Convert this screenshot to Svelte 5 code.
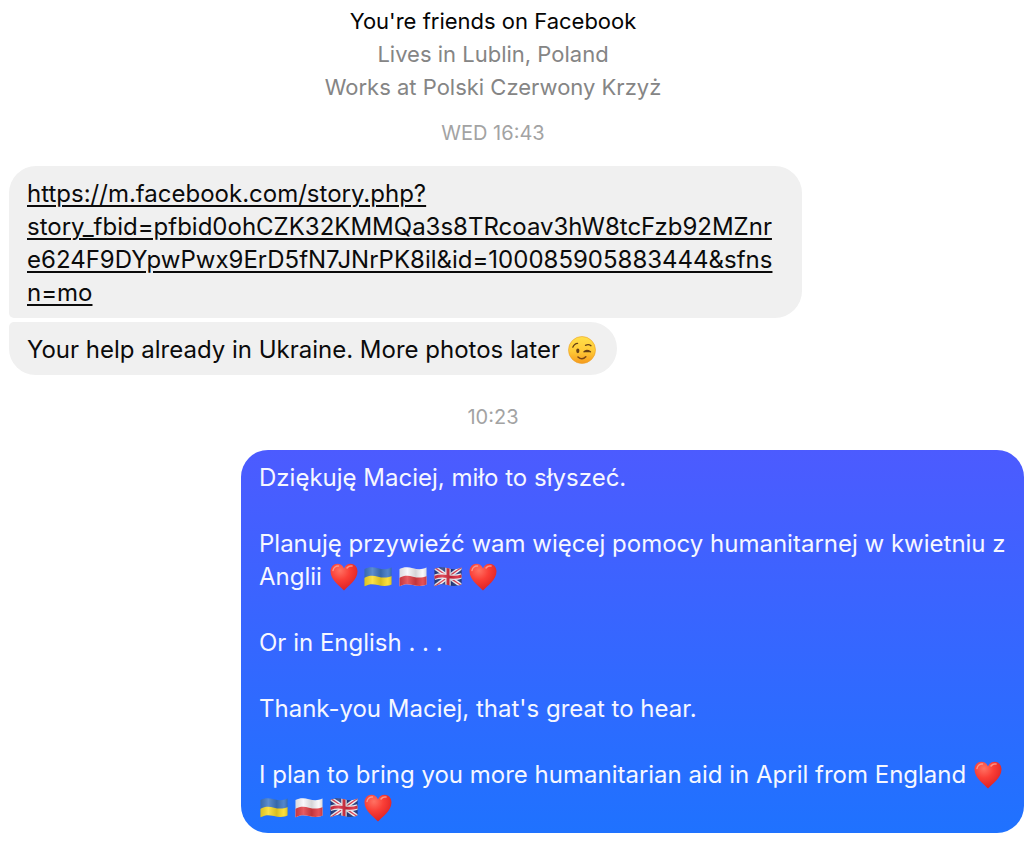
<script>
  const outgoing = [
    'Dziękuję Maciej, miło to słyszeć.',
    '',
    'Planuję przywieźć wam więcej pomocy humanitarnej w kwietniu z Anglii {heart} {ua} {pl} {gb} {heart}',
    '',
    'Or in English . . .',
    '',
    "Thank-you Maciej, that's great to hear.",
    '',
    'I plan to bring you more humanitarian aid in April from England {heart} {ua} {pl} {gb} {heart}',
  ].map((line) => line.split(/(\{\w+\})/).filter(Boolean));

  const href =
    'https://m.facebook.com/story.php?story_fbid=pfbid0ohCZK32KMMQa3s8TRcoav3hW8tcFzb92MZnre624F9DYpwPwx9ErD5fN7JNrPK8il&id=100085905883444&sfnsn=mo';

  const wave = 'M.5 6C5 3.500 9 3.800 14 5.200S23 6.600 27.500 4.500V21.500C23 23.500 19 23.200 14 22S5 20.800 .5 23.300Z';
</script>

<svg class="defs" aria-hidden="true">
  <defs>
    <radialGradient id="heart-fill" cx="0.35" cy="0.25" r="0.8">
      <stop offset="0" stop-color="#ff7263" />
      <stop offset="0.45" stop-color="#fa3e36" />
      <stop offset="1" stop-color="#d91f24" />
    </radialGradient>
    <linearGradient id="fold" x1="0" x2="1" y1="0" y2="0">
      <stop offset="0" stop-color="#000" stop-opacity="0.12" />
      <stop offset="0.3" stop-color="#fff" stop-opacity="0.16" />
      <stop offset="0.6" stop-color="#000" stop-opacity="0.14" />
      <stop offset="0.85" stop-color="#fff" stop-opacity="0.1" />
      <stop offset="1" stop-color="#000" stop-opacity="0.16" />
    </linearGradient>
    <linearGradient id="face" x1="0" x2="0" y1="0" y2="1">
      <stop offset="0" stop-color="#ffe04a" />
      <stop offset="0.55" stop-color="#ffc936" />
      <stop offset="1" stop-color="#f59a1c" />
    </linearGradient>
    <clipPath id="flag-shape"><path d={wave} /></clipPath>
  </defs>
</svg>

{#snippet emoji(name)}
  {#if name === '{heart}'}
    <svg class="emoji" viewBox="0 0 28 28" role="img" aria-label="heart">
      <path
        d="M14 27.500C10.500 23.500 .5 17 .5 8.500C.5 3.700 3.700 .8 7.400 .8C10.500 .8 13 2.800 14 5.400C15 2.800 17.500 .8 20.600 .8C24.300 .8 27.500 3.700 27.500 8.500C27.500 17 17.500 23.500 14 27.500Z"
        fill="url(#heart-fill)"
      />
      <path d="M3 7.500C3.500 4.500 6 2.600 8.500 3M17 5C18.200 3.300 20 2.600 22 3.100" fill="none" stroke="#ffad9e" stroke-width="1.500" stroke-linecap="round" opacity="0.75" />
    </svg>
  {:else if name === '{wink}'}
    <svg class="emoji" viewBox="0 0 28 28" role="img" aria-label="winking face">
      <circle cx="14" cy="14" r="13.500" fill="url(#face)" stroke="#eda026" stroke-width="0.600" />
      <ellipse cx="9.800" cy="14.800" rx="1.600" ry="2.400" fill="#664016" />
      <path d="M4.800 11.200C5.800 8.800 7.500 7.400 9.600 7.300M17.500 9.300C19.500 8.300 21.500 8.500 23 9.700M16 15.800C18 13.700 20 14.200 22.500 15.800M16.500 15.700H21" fill="none" stroke="#664016" stroke-width="1.300" stroke-linecap="round" />
      <path d="M10 21C12.600 23.300 15.500 23.200 17.800 20.800" fill="none" stroke="#7a4615" stroke-width="1.600" stroke-linecap="round" />
    </svg>
  {:else}
    <svg class="emoji" viewBox="0 0 28 28" role="img" aria-label="flag">
      <g clip-path="url(#flag-shape)">
        {#if name === '{ua}'}
          <path d="M0 0H28V28H0Z" fill="#3f78c5" />
          <path d="M0 15C5 12.400 9 12.400 14 13.700S23 15 28 13V28H0Z" fill="#fbdc26" />
        {:else if name === '{pl}'}
          <path d="M0 0H28V28H0Z" fill="#f8f7fa" />
          <path d="M0 15C5 12.400 9 12.400 14 13.700S23 15 28 13V28H0Z" fill="#e23d45" />
        {:else}
          <path d="M0 0H28V28H0Z" fill="#233a80" />
          <path d="M0 4L28 23M0 24L28 4" stroke="#f2f1f6" stroke-width="4" />
          <path d="M0 4L28 23M0 24L28 4" stroke="#d9344a" stroke-width="1.300" />
          <path d="M0 14.500C5 12.500 9 12.500 14 13.600S23 14.500 28 12.800M14 0V28" fill="none" stroke="#f2f1f6" stroke-width="5.500" />
          <path d="M0 14.500C5 12.500 9 12.500 14 13.600S23 14.500 28 12.800M14 0V28" fill="none" stroke="#d9283c" stroke-width="3" />
        {/if}
        <path d="M0 0H28V28H0Z" fill="url(#fold)" />
      </g>
    </svg>
  {/if}
{/snippet}

<main>
  <header>
    <p class="friends">You're friends on Facebook</p>
    <p>Lives in Lublin, Poland</p>
    <p>Works at Polski Czerwony Krzyż</p>
  </header>

  <time class="first">WED 16:43</time>

  <section class="incoming">
    <div class="bubble top">
      <a {href}>https://m.facebook.com/story.php?<br />story_fbid=pfbid0ohCZK32KMMQa3s8TRcoav3hW8tcFzb92MZnr<br />e624F9DYpwPwx9ErD5fN7JNrPK8il&amp;id=100085905883444&amp;sfns<br />n=mo</a>
    </div>
    <div class="bubble bottom">Your help already in Ukraine. More photos later {@render emoji('{wink}')}</div>
  </section>

  <time class="second">10:23</time>

  <section class="outgoing">
    {#each outgoing as parts}
      <p>{#each parts as part}{#if part.startsWith('{')}{@render emoji(part)}{:else}{part}{/if}{/each}</p>
    {/each}
  </section>
</main>

<style>
  :global(body) {
    margin: 0;
    background: #fff;
  }
  .defs {
    position: absolute;
    width: 0;
    height: 0;
  }
  main {
    display: flex;
    flex-direction: column;
    padding: 5px 0 16px 9px;
    font-family: Inter, 'Liberation Sans', sans-serif;
    font-size: 24px;
    line-height: 33px;
    color: #0b0b0b;
  }
  p {
    margin: 0;
    min-height: 33px;
  }
  header {
    padding-right: 47px;
    text-align: center;
    font-size: 22px;
    color: #858585;
  }
  .friends {
    color: #050505;
  }
  time {
    padding-right: 47px;
    text-align: center;
    font-size: 20px;
    line-height: 24px;
    color: #a3a3a3;
  }
  .first {
    margin: 17px 0 21px;
  }
  .second {
    margin: 30px 0 21px;
  }
  .incoming {
    display: flex;
    flex-direction: column;
    align-items: flex-start;
    gap: 4px;
  }
  .bubble {
    padding: 11px 22px 9px 18px;
    background: #f0f0f0;
    border-radius: 27px;
  }
  .top {
    padding-right: 30px;
    border-bottom-left-radius: 5px;
  }
  .bottom {
    border-top-left-radius: 5px;
  }
  a {
    color: inherit;
    text-decoration-thickness: 2px;
    text-underline-offset: 3px;
  }
  .outgoing {
    margin-left: 232px;
    padding: 11px 18px 9px;
    border-radius: 27px;
    background: linear-gradient(#4c5bff, #1f72ff);
    color: #f6f7ff;
  }
  .emoji {
    width: 28px;
    height: 28px;
    vertical-align: -4px;
    margin: -2px -1px -2px 1px;
  }
</style>
